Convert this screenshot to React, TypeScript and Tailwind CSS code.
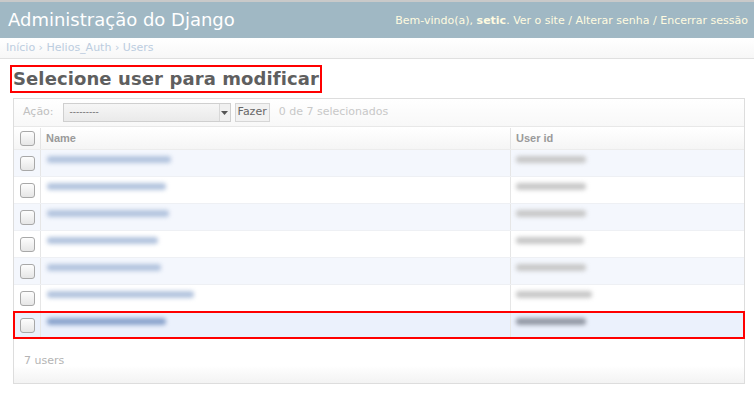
import React from "react";

const nameWidths = [124, 119, 122, 111, 114, 147, 119];
const idWidths = [70, 70, 70, 68, 70, 76, 70];

function Checkbox() {
  return (
    <div className="w-[15px] h-[15px] rounded-[3px] border border-[#a8a8a8] bg-gradient-to-b from-[#fdfdfd] to-[#e6e6e6]" />
  );
}

export default function App() {
  return (
    <div
      className="w-[754px] h-[395px] bg-white overflow-hidden relative"
      style={{ fontFamily: '"DejaVu Sans", sans-serif' }}
    >
      <div className="h-[38px] bg-[#a0b8c4] border-t-2 border-[#c9c9c9] flex items-center justify-between pl-[8px] pr-[6px]">
        <div className="text-[18px] text-white leading-none">Administração do Django</div>
        <div className="text-[11px] text-[#fffbe0] leading-none">
          Bem-vindo(a), <span className="font-bold">setic</span>. Ver o site / Alterar senha / Encerrar sessão
        </div>
      </div>
      <div className="h-[21px] bg-gradient-to-b from-white to-[#f7f7f7] border-b border-[#e0e0e0] flex items-center pl-[6px] text-[11px] text-[#bccde0]">
        Início › Helios_Auth › Users
      </div>
      <div className="pl-[13px] pt-[9px]">
        <div className="relative inline-block">
          <div className="text-[18px] font-bold text-[#5f5f5f] leading-none tracking-[0.1px] py-[2px]">
            Selecione user para modificar
          </div>
          <div className="absolute -left-[3px] -top-[3px] -right-[3px] -bottom-[3px] border-2 border-[#ff0000]" />
        </div>
      </div>
      <div className="ml-[13px] mr-[9px] mt-[6px] border border-[#dddddd] h-[286px] flex flex-col relative">
        <div className="h-[28px] flex items-center pl-[9px] bg-gradient-to-b from-white to-[#f8f8f8] border-b border-[#e8e8e8]">
          <span className="text-[11px] text-[#c0c0c0]">Ação:</span>
          <div className="ml-[9px] w-[168px] h-[19px] border border-[#cfcfcf] bg-gradient-to-b from-[#f6f6f6] to-[#eaeaea] flex items-center justify-between">
            <span className="text-[9px] text-[#666] pl-[6px] leading-none">---------</span>
            <div className="w-[11px] h-[17px] bg-[#f0f0f0] border-l border-[#d8d8d8] flex items-center justify-center">
              <svg width="7" height="4" viewBox="0 0 7 4"><path d="M0 0h7L3.5 4z" fill="#555" /></svg>
            </div>
          </div>
          <div className="ml-[4px] h-[19px] px-[2px] border border-[#d6d6d6] bg-[#f2f2f2] text-[11px] text-[#666] flex items-center">
            Fazer
          </div>
          <span className="ml-[9px] text-[11px] text-[#c8c8c8]">0 de 7 selecionados</span>
        </div>
        <div className="h-[22px] flex bg-gradient-to-b from-white to-[#f5f5f5] border-b border-[#ececec] mt-[1px]">
          <div className="w-[27px] flex items-center justify-center border-r border-[#e4e4e4]">
            <Checkbox />
          </div>
          <div
            className="w-[470px] flex items-center pl-[5px] text-[11px] font-bold text-[#9a9a9a] border-r border-[#e4e4e4]"
            style={{ fontFamily: '"Liberation Sans", Arial, sans-serif' }}
          >
            Name
          </div>
          <div
            className="flex-1 flex items-center pl-[5px] text-[11px] font-bold text-[#9a9a9a]"
            style={{ fontFamily: '"Liberation Sans", Arial, sans-serif' }}
          >
            User id
          </div>
        </div>
        {nameWidths.map((w, i) => {
          const last = i === 6;
          const bg = last ? "bg-[#ebf1fc]" : i % 2 === 0 ? "bg-[#f4f7fd]" : "bg-white";
          return (
            <div key={i} className={`h-[27px] flex ${bg} border-b border-[#eef0f4] relative`}>
              <div className="w-[27px] flex items-center justify-center border-r border-[#e6e6e6]">
                <Checkbox />
              </div>
              <div className="w-[470px] flex items-start pt-[6px] pl-[6px] border-r border-[#e6e6e6]">
                <div
                  className={`h-[7px] rounded-[3px] blur-[2px] ${last ? "bg-[#8aa3cc]" : "bg-[#b3c4de]"}`}
                  style={{ width: w }}
                />
              </div>
              <div className="flex-1 flex items-start pt-[6px] pl-[5px]">
                <div
                  className={`h-[7px] rounded-[3px] blur-[2px] ${last ? "bg-[#9298a4]" : "bg-[#c8c8c8]"}`}
                  style={{ width: idWidths[i] }}
                />
              </div>
              {last && (
                <div className="absolute -left-[1px] -right-[1px] -top-[1px] -bottom-[1px] border-2 border-[#ff0000]" />
              )}
            </div>
          );
        })}
        <div className="flex-1 flex flex-col bg-gradient-to-b from-white from-60% to-[#f3f3f3]">
          <div className="pl-[10px] pt-[14px] text-[11px] text-[#b4b4b4]">7 users</div>
        </div>
      </div>
    </div>
  );
}
